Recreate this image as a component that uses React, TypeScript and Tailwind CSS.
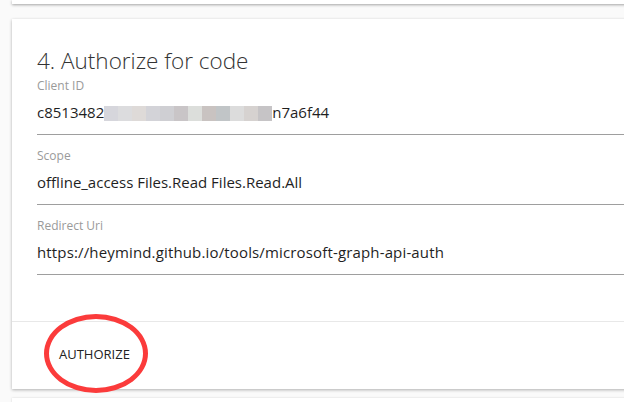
import React from 'react';

const font = { fontFamily: '"Open Sans", "Noto Sans", sans-serif' };

// mosaic tiles covering the hidden part of the client id
const MOSAIC = [
  '#d6d6dc', '#dcdcde', '#dedad8', '#d3d3d8', '#cfcfd3', '#c9c5c7',
  '#dcdedb', '#c9c3c1', '#c1c5c7', '#dcdcdc', '#d6d2d0', '#c6c4c6',
];

type FieldProps = {
  label: string;
  children: React.ReactNode;
};

const Field: React.FC<FieldProps> = ({ label, children }) => (
  <div className="flex flex-col mb-[13px]">
    <div className="h-4 text-[12px] leading-4 text-[#9a9a9a]">{label}</div>
    <div className="h-[41px] flex items-center pb-[3px] border-b border-[#9e9e9e] text-[15px] text-[#1f1f1f]">
      {children}
    </div>
  </div>
);

export default function App() {
  return (
    <div className="w-[624px] h-[402px] overflow-hidden bg-[#fafafa] relative" style={font}>
      {/* previous card, only its bottom edge is visible */}
      <div className="ml-[12px] w-[640px] h-[4px] bg-white shadow-[0_1px_3px_rgba(0,0,0,0.35)]" />

      {/* authorize card */}
      <div className="ml-[12px] mt-[15px] w-[640px] bg-white shadow-[0_1px_3px_rgba(0,0,0,0.3)]">
        <div className="pl-[25px] pt-[26px] pb-[33px]">
          <h2 className="text-[22.5px] leading-8 font-light text-[#333] mb-px">4. Authorize for code</h2>
          <Field label="Client ID">
            <span>c8513482</span>
            <span className="flex h-[15px] mt-[2px]">
              {MOSAIC.map((c, i) => (
                <span key={i} className="w-[14px] h-full" style={{ background: c }} />
              ))}
            </span>
            <span>n7a6f44</span>
          </Field>
          <Field label="Scope">offline_access Files.Read Files.Read.All</Field>
          <Field label="Redirect Uri">
            <span className="tracking-[0.15px]">https://heymind.github.io/tools/microsoft-graph-api-auth</span>
          </Field>
        </div>
        <div className="border-t border-[#e8e8e8] h-[68px] flex items-center pl-[47px] relative">
          <button className="text-[13px] text-[#222] uppercase pb-[2px]">Authorize</button>
          {/* red marker circled around the button */}
          <div className="absolute left-[32px] top-[-8px] w-[104px] h-[79px] rounded-[50%] border-[5px] border-[#fb3b3b]" />
        </div>
      </div>

      {/* next card edge */}
      <div className="ml-[12px] mt-[9px] w-[640px] h-[10px] bg-white shadow-[0_0_2px_rgba(0,0,0,0.15)]" />
    </div>
  );
}
